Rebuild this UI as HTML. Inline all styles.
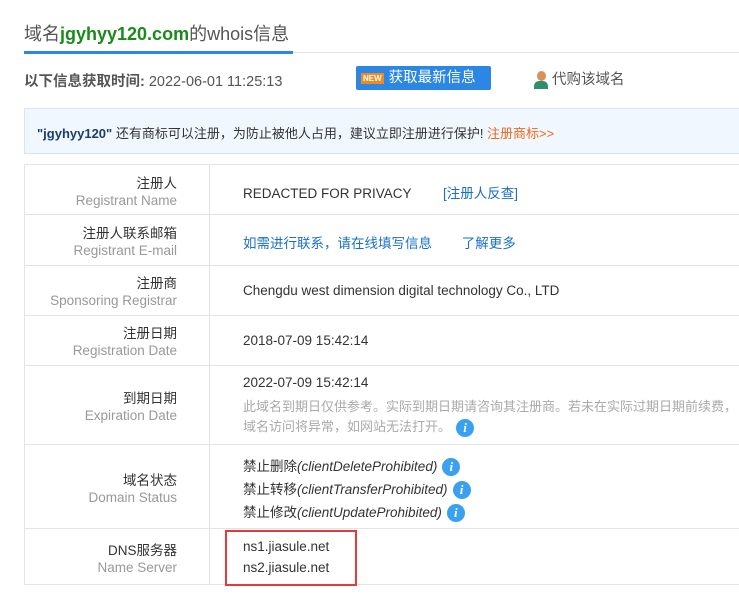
<!DOCTYPE html>
<html><head><meta charset="utf-8"><style>
body{margin:0;width:739px;height:614px;overflow:hidden;background:#fff;font-family:"Liberation Sans","Noto Sans CJK SC",sans-serif;color:#333;position:relative}
.a{position:absolute;white-space:nowrap}
.l1{right:562px;font-size:13.5px;color:#333}
.l2{right:562px;font-size:13.5px;color:#999}
.v{left:243px;font-size:13.5px;color:#333}
.hl{position:absolute;left:24px;width:720px;height:1px;background:#e4e4e4}
.i{display:inline-block;width:18px;height:18px;border-radius:50%;background:#3aa0f0;color:#fff;font:italic bold 13px "Liberation Serif",serif;text-align:center;line-height:18px;vertical-align:middle;margin-left:5px}
.blue{color:#1a6fc9}
</style></head><body>
<div class="a" style="left:24px;top:20px;font-size:18px;color:#555">域名<b style="color:#1a8a1a">jgyhyy120.com</b>的whois信息</div>
<div style="position:absolute;left:24px;top:52px;width:715px;height:1px;background:#e4e4e4"></div>
<div style="position:absolute;left:24px;top:51px;width:269px;height:3px;background:#2b87e3"></div>
<div class="a" style="left:24px;top:70px;font-size:14.5px;color:#555"><b>以下信息获取时间:</b> 2022-06-01 11:25:13</div>
<div class="a" style="left:356px;top:66px;width:135px;height:24px;background:#2b87e3;border-radius:2px;color:#fff;font-size:14.5px;line-height:24px"><span style="display:inline-block;background:#f08a20;color:#fff;font:bold 8px sans-serif;padding:1px 2px;margin:0 5px 0 5px;vertical-align:middle">NEW</span>获取最新信息</div>
<div class="a" style="left:534px;top:68px;font-size:14.5px;color:#555"><span style="display:inline-block;width:14px;height:20px;vertical-align:middle;position:relative"><span style="position:absolute;left:3px;top:1px;width:9px;height:10px;border-radius:50%;background:#d9905a"></span><span style="position:absolute;left:0;top:11px;width:14px;height:8px;border-radius:5px 5px 0 0;background:#2f8f6a"></span></span> 代购该域名</div>
<div style="position:absolute;left:24px;top:108px;width:720px;height:44px;background:#f0f7fe;border:1px solid #d3e7fb"></div>
<div class="a" style="left:37px;top:123px;font-size:13px;color:#333"><b style="color:#1b3c6e">"jgyhyy120"</b> 还有商标可以注册，为防止被他人占用，建议立即注册进行保护! <span style="color:#f06a1a">注册商标&gt;&gt;</span></div>
<div style="position:absolute;left:24px;top:164px;width:1px;height:420px;background:#e4e4e4"></div>
<div style="position:absolute;left:209px;top:164px;width:1px;height:420px;background:#e4e4e4"></div>
<div class="hl" style="top:164px"></div><div class="hl" style="top:214px"></div><div class="hl" style="top:265px"></div><div class="hl" style="top:315px"></div><div class="hl" style="top:365px"></div><div class="hl" style="top:444px"></div><div class="hl" style="top:528px"></div><div class="hl" style="top:584px"></div>
<div class="a l1" style="top:172px">注册人</div><div class="a l2" style="top:193px">Registrant Name</div>
<div class="a v" style="top:182px">REDACTED FOR PRIVACY <span class="blue" style="margin-left:28px">[注册人反查]</span></div>
<div class="a l1" style="top:222px">注册人联系邮箱</div><div class="a l2" style="top:243px">Registrant E-mail</div>
<div class="a v blue" style="top:232px">如需进行联系，请在线填写信息 <span style="margin-left:26px">了解更多</span></div>
<div class="a l1" style="top:272px">注册商</div><div class="a l2" style="top:293px">Sponsoring Registrar</div>
<div class="a v" style="top:283px">Chengdu west dimension digital technology Co., LTD</div>
<div class="a l1" style="top:322px">注册日期</div><div class="a l2" style="top:343px">Registration Date</div>
<div class="a v" style="top:333px">2018-07-09 15:42:14</div>
<div class="a l1" style="top:387px">到期日期</div><div class="a l2" style="top:408px">Expiration Date</div>
<div class="a v" style="top:375px">2022-07-09 15:42:14</div>
<div class="a v" style="top:396px;font-size:13px;color:#aaa">此域名到期日仅供参考。实际到期日期请咨询其注册商。若未在实际过期日期前续费，</div>
<div class="a v" style="top:416px;font-size:13px;color:#aaa">域名访问将异常，如网站无法打开。<span class="i">i</span></div>
<div class="a l1" style="top:469px">域名状态</div><div class="a l2" style="top:490px">Domain Status</div>
<div class="a v" style="top:455px">禁止删除<i>(clientDeleteProhibited)</i><span class="i">i</span></div>
<div class="a v" style="top:478px">禁止转移<i>(clientTransferProhibited)</i><span class="i">i</span></div>
<div class="a v" style="top:501px">禁止修改<i>(clientUpdateProhibited)</i><span class="i">i</span></div>
<div class="a l1" style="top:539px">DNS服务器</div><div class="a l2" style="top:560px">Name Server</div>
<div style="position:absolute;left:225px;top:530px;width:128px;height:52px;border:2px solid #e8383a"></div>
<div class="a v" style="top:539px">ns1.jiasule.net</div>
<div class="a v" style="top:560px">ns2.jiasule.net</div>
</body></html>
